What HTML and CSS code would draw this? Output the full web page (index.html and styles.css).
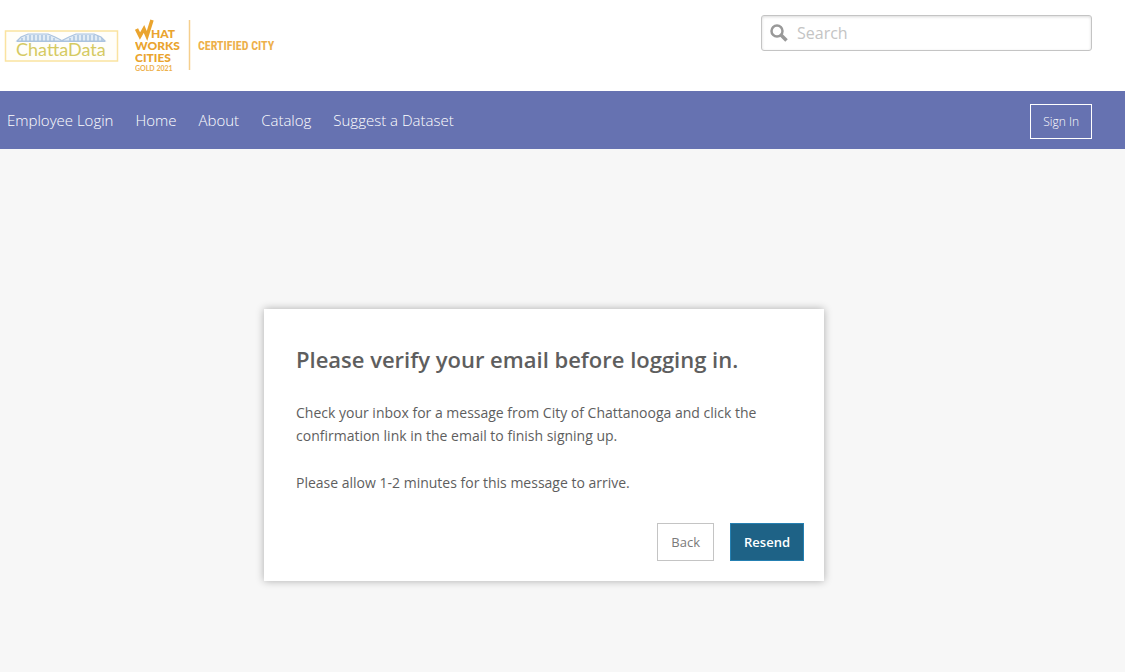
FILE: index.html
```html
<!DOCTYPE html>
<html lang="en">
  <head>
    <meta charset="UTF-8" />
    <meta name="viewport" content="width=device-width, initial-scale=1.0" />
    <title>Verify Email | ChattaData</title>
    <link rel="stylesheet" href="styles.css">
  </head>

  <body>
    <header class="site-header">
      <a class="logo" href="#" aria-label="ChattaData home">
        <svg class="logo-chatta" width="115" height="34" viewBox="0 0 115 34">
          <rect x="1.5" y="2" width="112" height="30" fill="#fffefa" stroke="#fae3a0" stroke-width="1.5" />
          <g fill="#e3edf6" stroke="#abc3df" stroke-width="1.2">
            <path d="M13 12 L17 8 L24 5 H44 L51 8 L57 11 L57 12 Z" />
            <path d="M57 12 L65 8 L72 5 H90 L97 8 L101 12 Z" />
          </g>
          <path d="M18 9v3M22 7v5M26 6v6M30 6v6M34 6v6M38 6v6M42 6v6M46 7v5M50 9v3M66 9v3M70 7v5M74 6v6M78 6v6M82 6v6M86 6v6M90 6v6M94 7v5M98 9v3" stroke="#abc3df" stroke-width="1.5" />
          <path d="M13 12.5H101" stroke="#abc3df" />
          <text class="chatta-text" x="12" y="27">ChattaData</text>
        </svg>
        <svg class="logo-wwc" width="140" height="56" viewBox="0 0 140 56">
          <path d="M1.5 11 L5 18 L9 11 L12 18 L17 2" fill="none" stroke="#eaa42e" stroke-width="3.5" />
          <text class="wwc-text" x="16" y="20">HAT</text>
          <text class="wwc-text" x="0" y="32">WORKS</text>
          <text class="wwc-text" x="0" y="44">CITIES</text>
          <text class="wwc-year" x="0" y="53">GOLD 2021</text>
          <path d="M54.5 2V52" stroke="#f5cf8d" stroke-width="1.5" />
          <text class="wwc-certified" x="63" y="32">CERTIFIED CITY</text>
        </svg>
      </a>
      <form class="search" role="search">
        <svg class="search-icon" width="18" height="18" viewBox="0 0 18 18">
          <circle cx="7" cy="7" r="5.5" fill="none" stroke="#999" stroke-width="2.5" />
          <path d="M11 11 L16.5 16.5" stroke="#999" stroke-width="3.5" />
        </svg>
        <input type="search" class="search-input" placeholder="Search" aria-label="Search" />
      </form>
    </header>

    <nav class="navbar">
      <div class="nav-links">
        <a href="#">Employee Login</a>
        <a href="#">Home</a>
        <a href="#">About</a>
        <a href="#">Catalog</a>
        <a href="#">Suggest a Dataset</a>
      </div>
      <a class="sign-in" href="#">Sign In</a>
    </nav>

    <main class="content">
      <section class="verify-card">
        <h1>Please verify your email before logging in.</h1>
        <p>Check your inbox for a message from City of Chattanooga and click the confirmation link in the email to finish signing up.</p>
        <p>Please allow 1-2 minutes for this message to arrive.</p>
        <div class="actions">
          <button type="button" class="btn">Back</button>
          <button type="button" class="btn btn-primary">Resend</button>
        </div>
      </section>
    </main>
  </body>
</html>
```

FILE: styles.css
```css
* {
  box-sizing: border-box;
}

body {
  margin: 0;
  min-height: 100vh;
  display: flex;
  flex-direction: column;
  background-color: #f7f7f7;
  color: #5e5e5e;
  font-family: "Open Sans", "Noto Sans", sans-serif;
  font-size: 14px;
}

a {
  color: inherit;
  text-decoration: none;
}

.site-header {
  display: flex;
  justify-content: space-between;
  align-items: flex-start;
  padding: 15px 33px 15px 4px;
  min-height: 91px;
  background-color: #fff;
}

.logo {
  display: flex;
  align-items: center;
  gap: 16px;
  padding-top: 3px;
}

.chatta-text {
  font-family: Lato, sans-serif;
  font-size: 18px;
  font-weight: 400;
  fill: #d5ca62;
}

.wwc-text {
  font-family: Lato, sans-serif;
  font-size: 12px;
  font-weight: 900;
  fill: #eaa42e;
}

.wwc-year {
  font-family: Lato, sans-serif;
  font-size: 7px;
  font-weight: 700;
  fill: #edb04b;
}

.wwc-certified {
  font-family: "Roboto Condensed", "Liberation Sans Narrow", Roboto, sans-serif;
  font-size: 12px;
  font-weight: 700;
  fill: #edb04b;
}

.search {
  display: flex;
  align-items: center;
  gap: 9px;
  width: 331px;
  height: 36px;
  padding: 0 8px;
  border: 1px solid #c4c4c4;
  border-radius: 3px;
  box-shadow: inset 0 1px 3px rgba(0, 0, 0, 0.15);
}

.search-input {
  flex: 1;
  min-width: 0;
  padding: 0;
  border: none;
  outline: none;
  background: transparent;
  font-family: inherit;
  font-size: 16px;
  color: #5e5e5e;
}

.search-input::placeholder {
  color: #c4c4c4;
}

/* Navigation */
.navbar {
  display: flex;
  justify-content: space-between;
  align-items: center;
  min-height: 58px;
  padding: 2px 33px 0 7px;
  background-color: #6672b1;
  color: #fff;
}

.nav-links {
  display: flex;
  flex-wrap: wrap;
  gap: 22px;
  padding-bottom: 2px;
  font-size: 15px;
  font-weight: 300;
}

.sign-in {
  padding: 8px 12px;
  border: 1px solid #fff;
  font-size: 12px;
  font-weight: 300;
  line-height: 17px;
}

/* Verification message */
.content {
  flex: 1;
  display: flex;
  justify-content: center;
  align-items: flex-start;
  padding: 160px 37px 40px 0;
}

.verify-card {
  width: 100%;
  max-width: 560px;
  padding: 32px 20px 20px 32px;
  background-color: #fff;
  box-shadow: 0 0 8px rgba(0, 0, 0, 0.3);
}

.verify-card h1 {
  margin: 0 0 24px;
  font-size: 22px;
  font-weight: 600;
  line-height: 36px;
}

.verify-card p {
  margin: 0 30px 24px 0;
  line-height: 23px;
}

.actions {
  display: flex;
  justify-content: flex-end;
  gap: 16px;
  padding-top: 5px;
}

.btn {
  padding: 8px 13px;
  border: 1px solid #c4c4c4;
  background-color: #fff;
  color: #7a7a7a;
  font-family: inherit;
  font-size: 13px;
  line-height: 20px;
  cursor: pointer;
}

.btn-primary {
  border-color: #2580b2;
  background-color: #1e6286;
  color: #fff;
  font-weight: 600;
}
```
